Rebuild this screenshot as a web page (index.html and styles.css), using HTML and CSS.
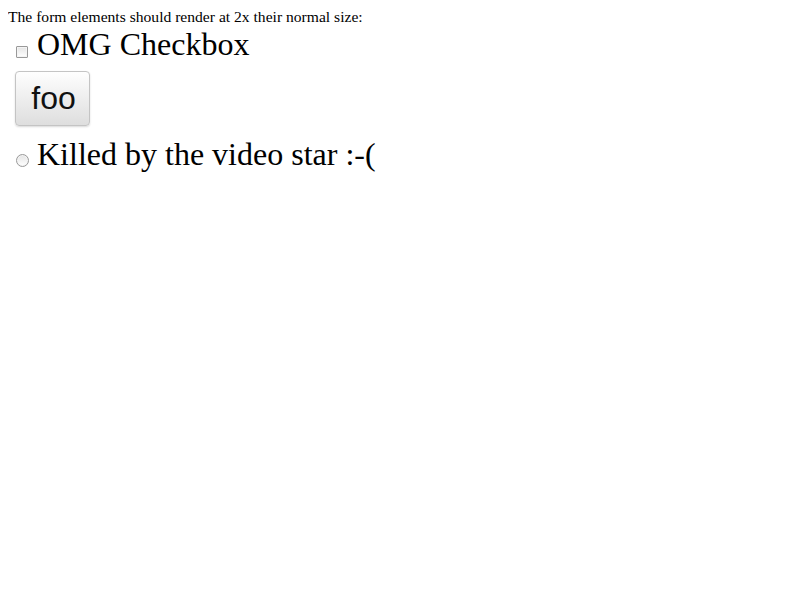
FILE: index.html
```html
<!DOCTYPE html>
<html>
<head>
<meta charset="utf-8">
<link rel="stylesheet" href="styles.css">
</head>
<body>
<div class="intro">The form elements should render at 2x their normal size:</div>
<div class="big">
  <div class="row row-check"><input type="checkbox" class="check" id="c1"><label for="c1">OMG Checkbox</label></div>
  <div class="row row-button"><button class="btn">foo</button></div>
  <div class="row row-radio"><input type="radio" class="radio" id="r1"><label for="r1">Killed by the video star :-(</label></div>
</div>
</body>
</html>
```
FILE: styles.css
```css
body {
  margin: 8px;
  font-family: "Liberation Serif", "Times New Roman", serif;
  font-size: 16px;
  color: #000;
  background: #fff;
}
.intro {
  font-size: 15.6px;
  line-height: 18px;
}
.big {
  font-size: 32px;
  line-height: 37px;
}
.check, .radio {
  -webkit-appearance: none;
  appearance: none;
  width: 12px;
  height: 12px;
  margin: 0 9px 0 8px;
  padding: 0;
  vertical-align: -3px;
  box-sizing: border-box;
  border: 1px solid #999999;
  background: linear-gradient(#e4e4e4, #ffffff);
  box-shadow: inset 0 0 0 1px #f4f4f4;
}
.check {
  border-radius: 1px;
}
.radio {
  border-radius: 50%;
  width: 13px;
  height: 13px;
  margin-right: 8px;
  vertical-align: -2px;
}
.row-button {
  padding: 8px 0 10px 7px;
  line-height: 0;
}
.btn {
  font-family: "Liberation Sans", Arial, sans-serif;
  font-size: 32px;
  line-height: 37px;
  width: 75px;
  height: 55px;
  padding: 0 0 0 2px;
  margin: 0;
  border: 1px solid #c4c4c4;
  border-radius: 4px;
  background: linear-gradient(#fefefe, #dedede);
  box-shadow: 0 1px 2px rgba(0,0,0,0.15);
  color: #111;
}
```
